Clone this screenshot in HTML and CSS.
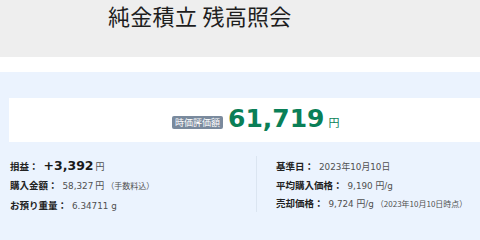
FILE: index.html
```html
<!DOCTYPE html>
<html lang="ja">
<head>
<meta charset="utf-8">
<title>純金積立 残高照会</title>
<link rel="stylesheet" href="styles.css">
</head>
<body>
<header class="page-header">
  <h1 class="page-title">純金積立 残高照会</h1>
</header>
<div class="gap"></div>
<main class="panel">
  <section class="summary">
    <span class="badge">時価評価額</span>
    <span class="total">61,719</span>
    <span class="total-unit">円</span>
  </section>
  <section class="details">
    <div class="col col-left">
      <div class="row">
        <span class="label">損益：</span>
        <span class="profit">+3,392</span><span class="unit">円</span>
      </div>
      <div class="row">
        <span class="label">購入金額：</span>
        <span class="value">58,327</span><span class="unit">円</span><span class="note">（手数料込）</span>
      </div>
      <div class="row">
        <span class="label">お預り重量：</span>
        <span class="value">6.34711 g</span>
      </div>
    </div>
    <div class="col col-right">
      <div class="row">
        <span class="label">基準日：</span>
        <span class="value">2023年10月10日</span>
      </div>
      <div class="row">
        <span class="label">平均購入価格：</span>
        <span class="value">9,190 円/g</span>
      </div>
      <div class="row">
        <span class="label">売却価格：</span>
        <span class="value">9,724 円/g</span><span class="note">（2023年10月10日時点）</span>
      </div>
    </div>
  </section>
</main>
</body>
</html>
```

FILE: styles.css
```css
* { box-sizing: border-box; }
html, body { margin: 0; padding: 0; }
body {
  width: 480px;
  height: 240px;
  overflow: hidden;
  background: #ffffff;
  font-family: "DejaVu Sans", "Noto Sans CJK JP", sans-serif;
  color: #222;
}
.page-header {
  height: 57px;
  background: #eeeeee;
  padding: 2px 0 0 108px;
}
.page-title {
  margin: 0;
  font-family: "Noto Sans CJK JP", sans-serif;
  font-weight: 400;
  font-size: 22px;
  line-height: 26px;
  color: #1e1e1e;
  letter-spacing: 0.3px;
}
.gap { height: 15px; }
.panel {
  height: 168px;
  background: #ebf3fe;
  padding: 26px 0 0 9px;
}
.summary {
  height: 44px;
  background: #ffffff;
  display: flex;
  align-items: baseline;
  padding: 6px 0 0 163px;
}
.badge {
  background: #7a8a9d;
  color: #fff;
  font-family: "Noto Sans CJK JP", sans-serif;
  font-size: 9px;
  line-height: 13px;
  padding: 0 3px;
  border-radius: 2px;
  position: relative;
  top: -1px;
}
.total {
  margin-left: 5px;
  font-size: 25px;
  font-weight: 700;
  color: #0a7f57;
  line-height: 30px;
}
.total-unit {
  margin-left: 4px;
  font-family: "Noto Sans CJK JP", sans-serif;
  font-size: 11px;
  color: #0a7f57;
}
.details {
  display: flex;
  padding-top: 12px;
}
.col { display: flex; flex-direction: column; }
.col-left { width: 247px; padding-left: 1px; }
.col-right {
  border-left: 1px solid #dbe5f1;
  padding-left: 19px;
  margin-top: 2px;
  height: 56px;
}
.row {
  height: 20px;
  display: flex;
  align-items: baseline;
  padding-top: 4px;
  white-space: nowrap;
}
.col-right .row { height: 19.5px; padding-top: 3px; }
.label {
  font-family: "Noto Sans CJK JP", sans-serif;
  font-weight: 700;
  font-size: 9.5px;
  color: #222;
  margin-right: 5px;
}
.col-right .label { margin-right: 5px; }
.profit {
  font-size: 12.5px;
  font-weight: 700;
  color: #1a1a1a;
}
.value {
  font-size: 8.8px;
  color: #505050;
}
.unit {
  font-family: "Noto Sans CJK JP", sans-serif;
  font-size: 9px;
  color: #505050;
  margin-left: 2px;
}
.note {
  font-family: "Noto Sans CJK JP", sans-serif;
  font-size: 8px;
  color: #505050;
  margin-left: 2px;
}
```
